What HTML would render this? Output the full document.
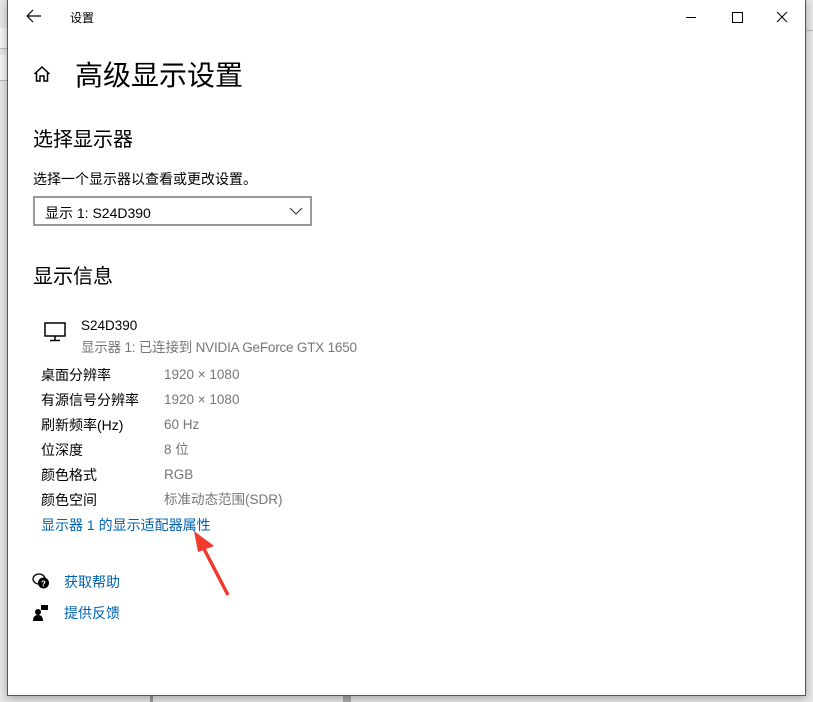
<!DOCTYPE html>
<html><head><meta charset="utf-8"><style>
html,body{margin:0;padding:0;width:813px;height:702px;overflow:hidden;background:#e6e6e6;font-family:"Liberation Sans","Noto Sans CJK SC",sans-serif;}
.win{position:absolute;left:7px;top:-1px;width:797px;height:695px;background:#fff;border:1px solid #555;box-shadow:0 2px 8px rgba(0,0,0,.3);}
.t{position:absolute;white-space:nowrap;color:#000;}
.row{position:absolute;font-size:14px;white-space:nowrap;line-height:18px}
.lbl{left:33px;color:#000}
.val{left:156px;color:#767676;font-size:13.5px;top:1px}
.blue{color:#0063b1}
</style></head><body>
<div style="position:absolute;left:0;top:28px;width:7px;height:20px;background:#f4f4f4;border-bottom:1px solid #bbb"></div>
<div style="position:absolute;left:0;top:55px;width:7px;height:25px;background:#f4f4f4;border-bottom:1px solid #bbb"></div>
<div style="position:absolute;left:805px;top:30px;width:8px;height:1px;background:#bbb"></div>
<div style="position:absolute;left:150px;top:694px;width:3px;height:8px;background:#999"></div>
<div style="position:absolute;left:343px;top:694px;width:8px;height:8px;background:#aaa"></div>
<div class="win">
 <svg style="position:absolute;left:18px;top:9px" width="16" height="14"><path d="M1 7H15M1 7L7 1M1 7L7 13" stroke="#000" stroke-width="1.2" fill="none"/></svg>
 <div class="t" style="left:62px;top:9px;font-size:12px">设置</div>
 <div style="position:absolute;left:678px;top:17px;width:10px;height:1px;background:#000"></div>
 <div style="position:absolute;left:724px;top:12px;width:9px;height:9px;border:1px solid #000"></div>
 <svg style="position:absolute;left:768px;top:11px" width="12" height="12"><path d="M1 1L11 11M11 1L1 11" stroke="#000" stroke-width="1" fill="none"/></svg>
 <svg style="position:absolute;left:25px;top:65px" width="18" height="18"><path d="M1.5 9L9 2L16.5 9M3.5 7V16H7V11H11V16H14.5V7" stroke="#000" stroke-width="1.5" fill="none"/></svg>
 <div class="t" style="left:67px;top:54px;font-size:28px">高级显示设置</div>
 <div class="t" style="left:25px;top:123px;font-size:20px">选择显示器</div>
 <div class="t" style="left:25px;top:169px;font-size:14px">选择一个显示器以查看或更改设置。</div>
 <div style="position:absolute;left:25px;top:196px;width:275px;height:26px;border:2px solid #999"></div>
 <div class="t" style="left:37px;top:203px;font-size:14px">显示 1: S24D390</div>
 <svg style="position:absolute;left:281px;top:207px" width="14" height="8"><path d="M1 1L7 7L13 1" stroke="#333" stroke-width="1" fill="none"/></svg>
 <div class="t" style="left:25px;top:260px;font-size:20px">显示信息</div>
 <svg style="position:absolute;left:36px;top:322px" width="22" height="20"><rect x="1" y="1" width="20" height="13" stroke="#000" stroke-width="1.5" fill="none"/><path d="M11 14V18M6 18.5H16" stroke="#000" stroke-width="1.5"/></svg>
 <div class="t" style="left:73px;top:318px;font-size:13.5px">S24D390</div>
 <div class="t" style="left:73px;top:336px;font-size:13.5px;color:#767676;letter-spacing:-0.2px">显示器 1: 已连接到 NVIDIA GeForce GTX 1650</div>
 <div class="row lbl" style="top:366px">桌面分辨率</div><div class="row val" style="top:366px">1920 × 1080</div>
 <div class="row lbl" style="top:391px">有源信号分辨率</div><div class="row val" style="top:391px">1920 × 1080</div>
 <div class="row lbl" style="top:416px">刷新频率(Hz)</div><div class="row val" style="top:416px">60 Hz</div>
 <div class="row lbl" style="top:441px">位深度</div><div class="row val" style="top:441px">8 位</div>
 <div class="row lbl" style="top:466px">颜色格式</div><div class="row val" style="top:466px">RGB</div>
 <div class="row lbl" style="top:491px">颜色空间</div><div class="row val" style="top:491px">标准动态范围(SDR)</div>
 <div class="row lbl blue" style="top:516px">显示器 1 的显示适配器属性</div>
 <svg style="position:absolute;left:24px;top:572px" width="18" height="18"><ellipse cx="7" cy="7" rx="6" ry="5" stroke="#000" stroke-width="1.3" fill="#fff"/><circle cx="11.5" cy="11" r="5.5" fill="#000"/><text x="9" y="14.5" font-size="8" fill="#fff" font-family="Liberation Sans" font-weight="bold">?</text></svg>
 <div class="row blue" style="left:56px;top:573px">获取帮助</div>
 <svg style="position:absolute;left:25px;top:604px" width="16" height="18"><rect x="8" y="1" width="7" height="5" fill="#000"/><circle cx="5" cy="8" r="3" fill="#000"/><path d="M0 17Q0 11 5 11Q10 11 10 17Z" fill="#000"/></svg>
 <div class="row blue" style="left:56px;top:604px">提供反馈</div>
</div>
<svg style="position:absolute;left:0;top:0" width="813" height="702"><path d="M228 595L203 547" stroke="#f03a2e" stroke-width="3.5"/><path d="M194 531L214 546L198 552Z" fill="#f03a2e"/></svg>
</body></html>
